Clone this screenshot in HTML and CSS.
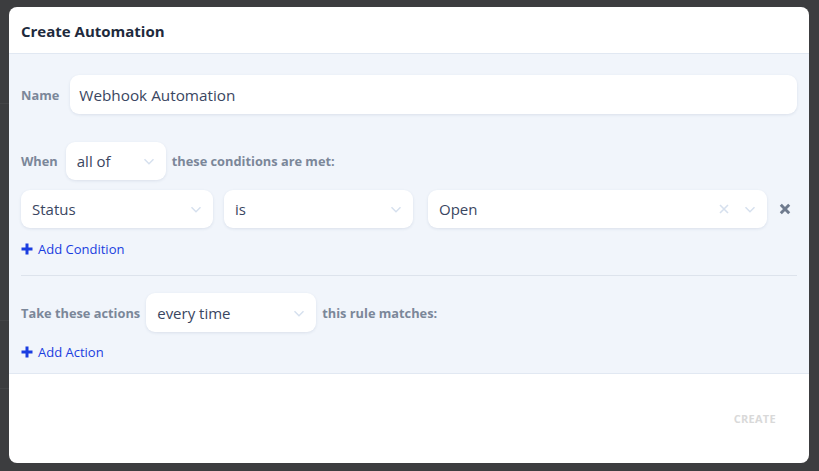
FILE: index.html
```html
<!DOCTYPE html>
<html>
<head>
<meta charset="utf-8">
<link rel="stylesheet" href="styles.css">
</head>
<body>
<div class="overlay">
  <div class="modal">
    <div class="modal-header">Create Automation</div>
    <div class="modal-body">
      <div class="row name-row">
        <span class="label">Name</span>
        <div class="input name-input">Webhook Automation</div>
      </div>
      <div class="row when-row">
        <span class="label">When</span>
        <div class="select sel-allof"><span>all of</span><svg class="chev" viewBox="0 0 20 20"><path d="M5 8l5 5 5-5" /></svg></div>
        <span class="label">these conditions are met:</span>
      </div>
      <div class="row cond-row">
        <div class="select sel-status"><span>Status</span><svg class="chev" viewBox="0 0 20 20"><path d="M5 8l5 5 5-5" /></svg></div>
        <div class="select sel-is"><span>is</span><svg class="chev" viewBox="0 0 20 20"><path d="M5 8l5 5 5-5" /></svg></div>
        <div class="select sel-open"><span>Open</span>
          <svg class="clear" viewBox="0 0 20 20"><path d="M5 5l10 10M15 5L5 15" /></svg>
          <svg class="chev" viewBox="0 0 20 20"><path d="M5 8l5 5 5-5" /></svg></div>
        <svg class="remove" viewBox="0 0 20 20"><path d="M4 4l12 12M16 4L4 16" /></svg>
      </div>
      <div class="add-link add-cond"><svg class="plus" viewBox="0 0 12 12"><path d="M6 0.5v11M0.5 6h11" /></svg>Add Condition</div>
      <div class="divider"></div>
      <div class="row act-row">
        <span class="label">Take these actions</span>
        <div class="select sel-every"><span>every time</span><svg class="chev" viewBox="0 0 20 20"><path d="M5 8l5 5 5-5" /></svg></div>
        <span class="label">this rule matches:</span>
      </div>
      <div class="add-link add-act"><svg class="plus" viewBox="0 0 12 12"><path d="M6 0.5v11M0.5 6h11" /></svg>Add Action</div>
    </div>
    <div class="modal-footer">
      <span class="create-btn">CREATE</span>
    </div>
  </div>
</div>
</body>
</html>
```

FILE: styles.css
```css
html, body {
  margin: 0;
  padding: 0;
}
body {
  font-family: "Open Sans", "Liberation Sans", sans-serif;
  width: 819px;
  height: 471px;
  overflow: hidden;
}
.overlay {
  width: 819px;
  height: 471px;
  box-sizing: border-box;
  padding: 7px 10px 8px 9px;
  background-color: #3c3d3f;
  background-image:
    linear-gradient(#444547, #444547),
    linear-gradient(#444547, #444547),
    linear-gradient(#444547, #444547);
  background-size: 9px 1px, 9px 1px, 9px 1px;
  background-position: 0 103px, 0 320px, 0 388px;
  background-repeat: no-repeat;
}
.modal {
  width: 800px;
  height: 456px;
  background: #ffffff;
  border-radius: 8px;
  overflow: hidden;
  display: flex;
  flex-direction: column;
}
.modal-header {
  height: 47px;
  box-sizing: border-box;
  padding: 14px 12px 0;
  font-size: 15px;
  font-weight: 700;
  color: #1e2a3d;
  border-bottom: 1px solid #e1e8f2;
  flex: none;
}
.modal-body {
  background: #f1f5fb;
  height: 320px;
  box-sizing: border-box;
  padding: 21px 12px 0;
  border-bottom: 1px solid #e1e8f2;
  flex: none;
}
.row {
  display: flex;
  align-items: center;
}
.label {
  font-size: 12.8px;
  font-weight: 700;
  color: #7b8799;
}
.input, .select {
  background: #ffffff;
  border-radius: 9px;
  box-shadow: 0 1px 3px rgba(60, 80, 120, 0.12);
  box-sizing: border-box;
  color: #3a4661;
  display: flex;
  align-items: center;
}
.name-input {
  margin-left: 11px;
  flex: 1;
  height: 39px;
  padding-left: 9px;
  font-size: 15.3px;
}
.when-row {
  margin-top: 28px;
}
.select {
  height: 38px;
  padding-left: 11px;
  padding-right: 8px;
  font-size: 15px;
}
.select span {
  flex: 1;
}
.chev {
  width: 18px;
  height: 18px;
  fill: none;
  stroke: #d6e0ee;
  stroke-width: 1.6;
}
.clear {
  width: 16px;
  height: 16px;
  fill: none;
  stroke: #d6e0ee;
  stroke-width: 2;
  margin-right: 9px;
}
.sel-allof {
  width: 100px;
  margin: 0 6px 0 8px;
}
.cond-row {
  margin-top: 10px;
}
.sel-status {
  width: 192px;
}
.sel-is {
  width: 189px;
  margin-left: 11px;
}
.sel-open {
  width: 339px;
  margin-left: 15px;
}
.remove {
  width: 14px;
  height: 14px;
  margin-left: 11px;
  fill: none;
  stroke: #6f7b8e;
  stroke-width: 4.2;
}
.add-link {
  display: flex;
  align-items: center;
  font-size: 13px;
  color: #1a3de0;
  height: 20px;
}
.add-cond {
  margin-top: 11px;
}
.plus {
  width: 12px;
  height: 12px;
  margin-right: 5px;
  fill: none;
  stroke: #1a3de0;
  stroke-width: 3;
}
.divider {
  height: 1px;
  background: #dde3ec;
  margin-top: 16px;
}
.act-row {
  margin-top: 17px;
}
.sel-every {
  width: 170px;
  margin: 0 6px 0 6px;
  height: 39px;
}
.add-act {
  margin-top: 10px;
}
.modal-footer {
  flex: 1;
  display: flex;
  justify-content: flex-end;
  padding: 37px 33px 0 0;
  box-sizing: border-box;
}
.create-btn {
  font-size: 11px;
  font-weight: 700;
  color: #d9d9d9;
  letter-spacing: 0.3px;
}
```
